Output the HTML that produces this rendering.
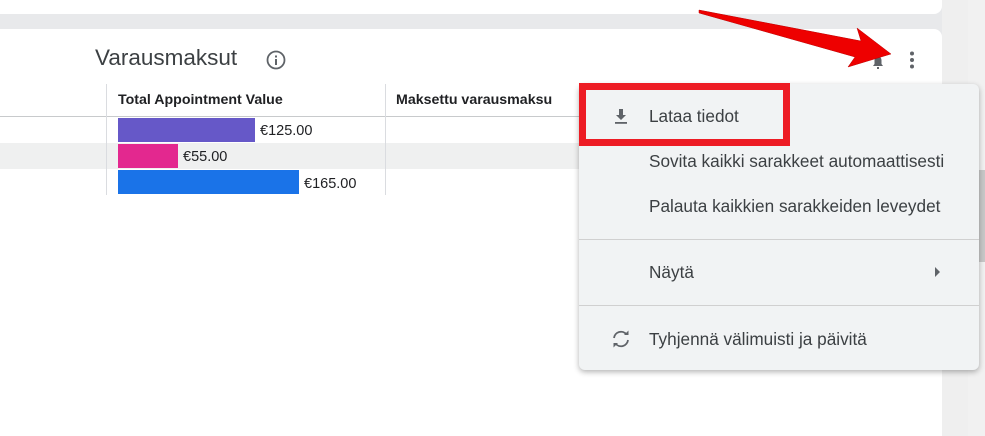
<!DOCTYPE html>
<html><head><meta charset="utf-8"><style>
body{margin:0;width:985px;height:436px;background:#e8e9eb;position:relative;overflow:hidden;font-family:"Liberation Sans",Arial,sans-serif;}
.card1{position:absolute;left:0;top:0;width:942px;height:14px;background:#fff;border-radius:0 0 8px 0;}
.card2{position:absolute;left:0;top:29px;width:942px;height:407px;background:#fff;border-radius:0 8px 0 0;}
.side{position:absolute;left:942px;top:0;width:26px;height:436px;background:#efefef;}
.sb{position:absolute;left:968px;top:0;width:17px;height:436px;background:#f1f1f1;}
.thumb{position:absolute;left:968px;top:170px;width:17px;height:92px;background:#c8c8c8;}
.title{position:absolute;left:95px;top:45px;font-size:22.5px;color:#3c4043;}
.t{position:absolute;font-size:14.5px;color:#202124;}
.menu{position:absolute;left:579px;top:84px;width:400px;height:286px;background:#f1f3f4;border-radius:6px;box-shadow:0 2px 6px rgba(0,0,0,.3);}
.mi{position:absolute;left:70px;font-size:17.2px;color:#3c4043;}
.div{position:absolute;left:0;width:400px;height:1px;background:#d0d0d0;}
</style></head><body>
<div class="card1"></div>
<div class="card2"></div>
<div class="side"></div><div class="sb"></div><div class="thumb"></div>
<div class="title">Varausmaksut</div>
<svg style="position:absolute;left:266px;top:50px" width="20" height="20" viewBox="0 0 20 20"><circle cx="10" cy="10" r="8.5" fill="none" stroke="#5f6368" stroke-width="1.8"/><rect x="9" y="9" width="2" height="6" fill="#5f6368"/><rect x="9" y="5.5" width="2" height="2" fill="#5f6368"/></svg>
<div style="position:absolute;left:0;top:116px;width:579px;height:1px;background:#c8cacc"></div>
<div style="position:absolute;left:0;top:143px;width:579px;height:26px;background:#eff0f0"></div>
<div style="position:absolute;left:106px;top:84px;width:1px;height:111px;background:#dadce0"></div>
<div style="position:absolute;left:385px;top:84px;width:1px;height:111px;background:#dadce0"></div>
<div class="t" style="left:118px;top:92px;font-weight:bold;font-size:14.2px">Total Appointment Value</div>
<div class="t" style="left:396px;top:92px;font-weight:bold;font-size:14.2px">Maksettu varausmaksu</div>
<div style="position:absolute;left:118px;top:118px;width:137px;height:24px;background:#6658c8"></div>
<div class="t" style="left:260px;top:123px">€125.00</div>
<div style="position:absolute;left:118px;top:144px;width:60px;height:24px;background:#e3288f"></div>
<div class="t" style="left:183px;top:149px">€55.00</div>
<div style="position:absolute;left:118px;top:170px;width:181px;height:24px;background:#1a73e8"></div>
<div class="t" style="left:304px;top:176px">€165.00</div>
<svg style="position:absolute;left:868px;top:52px" width="20" height="20" viewBox="0 0 20 20"><path d="M5 14h10l-1.5-2V8a3.5 3.5 0 0 0-7 0v4z" fill="#5f6368"/><rect x="9" y="15" width="2" height="2" fill="#5f6368"/></svg>
<svg style="position:absolute;left:906px;top:50px" width="12" height="20"><circle cx="6" cy="3.5" r="2" fill="#5f6368"/><circle cx="6" cy="10" r="2" fill="#5f6368"/><circle cx="6" cy="16.5" r="2" fill="#5f6368"/></svg>
<svg style="position:absolute;left:0;top:0" width="985" height="436"><polygon points="699,10 861,41 857,28 891,54 848,67 855,57 699,13" fill="#ee0000" stroke="#b00" stroke-width=".5"/></svg>
<div class="menu">
<svg style="position:absolute;left:33px;top:23px" width="18" height="18" viewBox="0 0 18 18"><path d="M7 2h4v6h3l-5 5-5-5h3z" fill="#5f6368"/><rect x="3" y="15" width="12" height="1.8" fill="#5f6368"/></svg>
<div class="mi" style="top:22px">Lataa tiedot</div>
<div class="mi" style="top:67px">Sovita kaikki sarakkeet automaattisesti</div>
<div class="mi" style="top:112px">Palauta kaikkien sarakkeiden leveydet</div>
<div class="div" style="top:155px"></div>
<div class="mi" style="top:178px">Näytä</div>
<svg style="position:absolute;left:355px;top:182px" width="8" height="12"><path d="M1 1l5 5-5 5z" fill="#5f6368"/></svg>
<div class="div" style="top:221px"></div>
<svg style="position:absolute;left:31px;top:245px" width="22" height="20" viewBox="0 0 22 20"><path d="M4 9a7 7 0 0 1 12.5-3.5" fill="none" stroke="#5f6368" stroke-width="1.8"/><path d="M18 11a7 7 0 0 1-12.5 3.5" fill="none" stroke="#5f6368" stroke-width="1.8"/><path d="M14 6h4.5V1.5z" fill="#5f6368"/><path d="M8 14H3.5v4.5z" fill="#5f6368"/></svg>
<div class="mi" style="top:245px">Tyhjennä välimuisti ja päivitä</div>
</div>
<div style="position:absolute;left:579px;top:83px;width:197px;height:49px;border:7px solid #ed1c24"></div>
</body></html>
